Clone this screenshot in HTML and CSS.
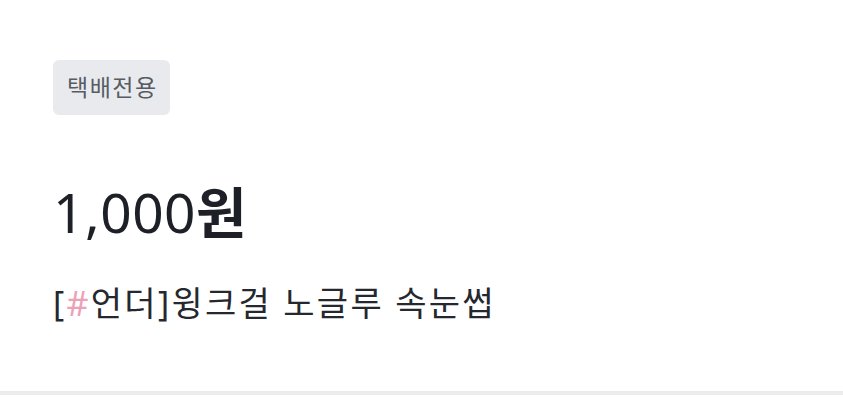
FILE: index.html
```html
<!DOCTYPE html>
<html lang="ko">
<head>
  <meta charset="UTF-8">
  <title>상품 정보</title>
  <link rel="stylesheet" href="styles.css">
</head>
<body>
  <div class="product">
    <span class="badge">택배전용</span>
    <div class="price">1,000<b>원</b></div>
    <div class="name">[<span class="hash">#</span>언더]윙크걸 노글루 속눈썹</div>
  </div>
  <div class="divider"></div>
</body>
</html>
```

FILE: styles.css
```css
body {
  background: #fff;
  color: #1d2026;
  font-family: 'Noto Sans', 'Noto Sans CJK KR', sans-serif;
  margin: 0;
  padding: 0;
}
.product {
  padding: 60px 53px 0;
  height: 391px;
  box-sizing: border-box;
}
.badge {
  display: inline-block;
  background: #e9eaee;
  color: #575b63;
  font-size: 23px;
  letter-spacing: 1.5px;
  line-height: 55px;
  height: 55px;
  padding: 0 12px 0 14px;
  border-radius: 6px;
}
.price {
  font-size: 55px;
  line-height: 70px;
  margin-top: 62px;
  letter-spacing: 0.5px;
}
.price b {
  font-weight: 700;
}
.name {
  font-size: 34px;
  letter-spacing: 2.3px;
  line-height: 44px;
  margin-top: 34px;
  color: #25282e;
}
.hash {
  color: #eba2b8;
}
.divider {
  height: 4px;
  background: #ececec;
}
```
